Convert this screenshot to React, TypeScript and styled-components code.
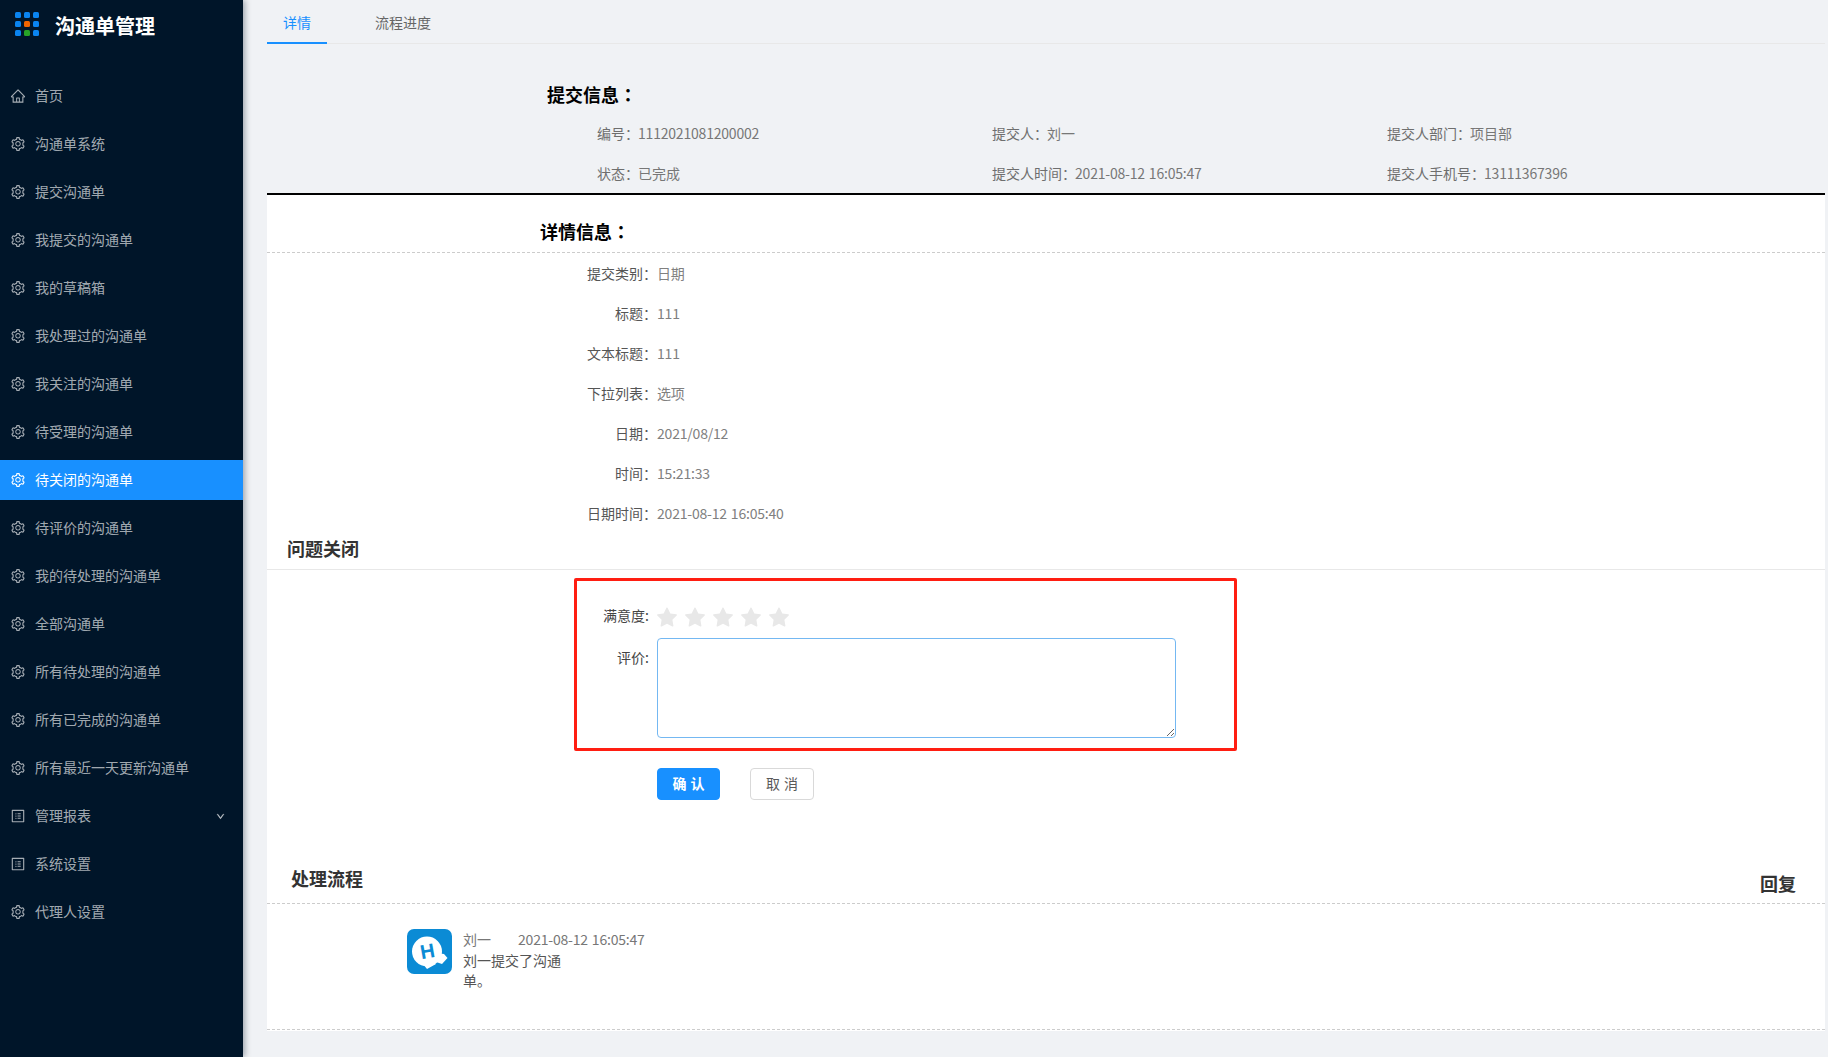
import React from "react";
import styled, { createGlobalStyle } from "styled-components";
import { AiFillStar, AiOutlineHome, AiOutlineProfile, AiOutlineSetting, AiOutlineDown } from "react-icons/ai";

const Global = createGlobalStyle`
  html, body { margin: 0; padding: 0; height: 100%; overflow: hidden; }
  body { background: #f0f2f5; font-family: "Noto Sans CJK SC", "Liberation Sans", sans-serif; font-size: 14px; }
  * { box-sizing: border-box; }
`;

const Page = styled.div`
  display: flex;
  height: 1057px;
`;

const Sidebar = styled.aside`
  width: 243px;
  flex: none;
  background: #001529;
  box-shadow: 2px 0 6px rgba(0, 21, 41, 0.35);
  position: relative;
  z-index: 2;
`;

const Brand = styled.div`
  display: flex;
  height: 76px;
  padding: 12px 0 0 15px;
  gap: 16px;
`;

const BrandGrid = styled.div`
  display: grid;
  grid-template-columns: repeat(3, 6px);
  grid-auto-rows: 6px;
  gap: 3px;
  height: 24px;
`;

const BrandDot = styled.span<{ $c: string }>`
  border-radius: 1.5px;
  background: ${(p) => p.$c};
`;

const BrandTitle = styled.div`
  color: #fff;
  font-size: 20px;
  font-weight: 700;
  line-height: 28px;
`;

const Menu = styled.nav`
  display: flex;
  flex-direction: column;
  gap: 8px;
`;

const MenuItem = styled.div<{ $active?: boolean }>`
  display: flex;
  align-items: center;
  gap: 8px;
  height: 40px;
  padding: 0 16px 0 10px;
  font-size: 14px;
  color: ${(p) => (p.$active ? "#fff" : "rgba(255,255,255,0.65)")};
  background: ${(p) => (p.$active ? "#1890ff" : "transparent")};
  svg { flex: none; }
`;

const MenuLabel = styled.span`
  flex: 1;
  padding: 0 0 2px 1px;
`;

const Arrow = styled(AiOutlineDown)`
  margin-right: 2px;
  stroke: currentColor;
  stroke-width: 60;
`;

const Main = styled.main`
  flex: 1;
  min-width: 0;
  padding: 0 3px 0 24px;
`;

const Tabs = styled.div`
  display: flex;
  gap: 32px;
  height: 44px;
  border-bottom: 1px solid #e8e8e8;
`;

const Tab = styled.div<{ $active?: boolean }>`
  height: 44px;
  padding: 11px 16px 0;
  line-height: 22px;
  font-size: 14px;
  color: ${(p) => (p.$active ? "#1890ff" : "#666")};
  border-bottom: 2px solid ${(p) => (p.$active ? "#1890ff" : "transparent")};
`;

const InfoSection = styled.section`
  height: 151px;
  padding: 38px 0 0 280px;
  border-bottom: 2px solid #000;
`;

const Title = styled.h2`
  margin: 0;
  font-family: "Noto Sans CJK TC", "Noto Sans CJK SC", sans-serif;
  font-size: 18px;
  font-weight: 700;
  line-height: 24px;
  color: #000;
`;

const InfoGrid = styled.div`
  display: grid;
  grid-template-columns: repeat(3, 395px);
  row-gap: 20px;
  margin: 17px 0 0 50px;
`;

const InfoCell = styled.div`
  line-height: 20px;
  color: #6e6e6e;
  font-size: 14px;
  white-space: nowrap;
`;

const InfoValue = styled.span`
  margin-left: -1px;
  color: #777;
`;

const Num = styled.span`
  letter-spacing: -0.2px;
  word-spacing: 1px;
`;

const Card = styled.section`
  background: #fff;
  height: 836px;
`;

const DetailHead = styled.div`
  padding: 24px 0 9px 273px;
  border-bottom: 1px dashed #ccc;
`;

const DetailRows = styled.div`
  display: flex;
  flex-direction: column;
  gap: 20px;
  padding-top: 10px;
`;

const DetailRow = styled.div`
  display: flex;
  line-height: 20px;
`;

const DetailLabel = styled.span`
  width: 390px;
  text-align: right;
  color: #555;
`;

const DetailValue = styled.span`
  color: #808080;
`;

const SectionTitle = styled.h3`
  margin: 13px 0 0;
  padding: 0 0 9px 20px;
  font-size: 18px;
  font-weight: 700;
  line-height: 24px;
  color: #333;
  border-bottom: 1px solid #e8e8e8;
`;

const RedBox = styled.div`
  width: 663px;
  margin: 8px 0 0 307px;
  padding: 26px 0 10px;
  border: 3px solid #ff1e12;
  border-radius: 2px;
  display: flex;
  flex-direction: column;
  gap: 11px;
`;

const FormRow = styled.div`
  display: flex;
  align-items: flex-start;
`;

const FormLabel = styled.label<{ $top: number }>`
  width: 80px;
  padding-right: 8px;
  text-align: right;
  line-height: 20px;
  color: #444;
  margin-top: ${(p) => p.$top}px;
`;

const Stars = styled.div`
  display: flex;
  gap: 4px;
  height: 20px;
  margin-left: -2px;
  color: #e8e8e8;
  svg { margin-top: -1px; }
`;

const TextArea = styled.textarea`
  display: block;
  width: 519px;
  height: 100px;
  border: 1px solid #74b8f2;
  border-radius: 4px;
  outline: none;
  background: #fff;
  resize: vertical;
`;

const Buttons = styled.div`
  display: flex;
  gap: 30px;
  margin: 17px 0 0 390px;
`;

const Button = styled.button<{ $primary?: boolean }>`
  width: ${(p) => (p.$primary ? 63 : 64)}px;
  height: 32px;
  padding: 0 0 2px;
  border-radius: 4px;
  font-family: inherit;
  font-size: 14px;
  letter-spacing: 4px;
  text-indent: 4px;
  font-weight: ${(p) => (p.$primary ? 700 : 400)};
  color: ${(p) => (p.$primary ? "#fff" : "#595959")};
  background: ${(p) => (p.$primary ? "#1890ff" : "#fff")};
  border: 1px solid ${(p) => (p.$primary ? "#1890ff" : "#d9d9d9")};
`;

const FlowHead = styled.div`
  display: flex;
  justify-content: space-between;
  align-items: flex-start;
  margin-top: 66px;
  padding: 0 29px 8px 24px;
  border-bottom: 1px dashed #ccc;
`;

const FlowTitle = styled.h3`
  margin: 0;
  font-size: 18px;
  font-weight: 700;
  line-height: 24px;
  color: #333;
`;

const ReplyTitle = styled(FlowTitle)`
  margin-top: 5px;
`;

const FlowEntry = styled.div`
  display: flex;
  gap: 11px;
  padding: 25px 0 38.5px 140px;
  border-bottom: 1px dashed #ccc;
`;

const FlowBody = styled.div`
  line-height: 20.5px;
`;

const FlowMeta = styled.div`
  color: #777;
  display: flex;
  gap: 27px;
  white-space: nowrap;
`;

const FlowText = styled.div`
  width: 100px;
  color: #555;
  word-break: break-all;
`;

const AvatarSvg = styled.svg`
  flex: none;
  display: block;
`;

const Avatar = () => (
  <AvatarSvg width="45" height="45" viewBox="0 0 45 45">
    <rect width="45" height="45" rx="7" fill="#0b8bd5" />
    <circle cx="20" cy="22.5" r="15" fill="#fff" />
    <path d="M16 35 L20 40 L29 35 Z" fill="#fff" />
    <path d="M29 24 L37 25 L40.5 29 L35 35 L29 33 Z" fill="#fff" />
    <text
      x="20.5"
      y="29"
      textAnchor="middle"
      fontFamily="'Liberation Sans', sans-serif"
      fontWeight="700"
      fontSize="20"
      fill="#0b8bd5"
      transform="rotate(-10 21 22)"
    >
      H
    </text>
  </AvatarSvg>
);

const dots = ["#0a84f0", "#0a84f0", "#0a84f0", "#0a84f0", "#f06400", "#0a84f0", "#0a84f0", "#27a327", "#0a84f0"];

type Icon = "home" | "gear" | "doc";
const menu: { label: string; icon: Icon; active?: boolean; arrow?: boolean }[] = [
  { label: "首页", icon: "home" },
  { label: "沟通单系统", icon: "gear" },
  { label: "提交沟通单", icon: "gear" },
  { label: "我提交的沟通单", icon: "gear" },
  { label: "我的草稿箱", icon: "gear" },
  { label: "我处理过的沟通单", icon: "gear" },
  { label: "我关注的沟通单", icon: "gear" },
  { label: "待受理的沟通单", icon: "gear" },
  { label: "待关闭的沟通单", icon: "gear", active: true },
  { label: "待评价的沟通单", icon: "gear" },
  { label: "我的待处理的沟通单", icon: "gear" },
  { label: "全部沟通单", icon: "gear" },
  { label: "所有待处理的沟通单", icon: "gear" },
  { label: "所有已完成的沟通单", icon: "gear" },
  { label: "所有最近一天更新沟通单", icon: "gear" },
  { label: "管理报表", icon: "doc", arrow: true },
  { label: "系统设置", icon: "doc" },
  { label: "代理人设置", icon: "gear" },
];

const icons = { home: AiOutlineHome, gear: AiOutlineSetting, doc: AiOutlineProfile };

const info: [string, string, boolean][] = [
  ["编号：", "1112021081200002", true],
  ["提交人：", "刘一", false],
  ["提交人部门：", "项目部", false],
  ["状态：", "已完成", false],
  ["提交人时间：", "2021-08-12 16:05:47", true],
  ["提交人手机号：", "13111367396", true],
];

const details: [string, string][] = [
  ["提交类别：", "日期"],
  ["标题：", "111"],
  ["文本标题：", "111"],
  ["下拉列表：", "选项"],
  ["日期：", "2021/08/12"],
  ["时间：", "15:21:33"],
  ["日期时间：", "2021-08-12 16:05:40"],
];

export default function App() {
  return (
    <>
      <Global />
      <Page>
        <Sidebar>
          <Brand>
            <BrandGrid>
              {dots.map((c, i) => (
                <BrandDot key={i} $c={c} />
              ))}
            </BrandGrid>
            <BrandTitle>沟通单管理</BrandTitle>
          </Brand>
          <Menu>
            {menu.map((m) => {
              const I = icons[m.icon];
              return (
                <MenuItem key={m.label} $active={m.active}>
                  <I size={16} />
                  <MenuLabel>{m.label}</MenuLabel>
                  {m.arrow && <Arrow size={9} />}
                </MenuItem>
              );
            })}
          </Menu>
        </Sidebar>
        <Main>
          <Tabs>
            <Tab $active>详情</Tab>
            <Tab>流程进度</Tab>
          </Tabs>
          <InfoSection>
            <Title>提交信息：</Title>
            <InfoGrid>
              {info.map(([k, v, n]) => (
                <InfoCell key={k}>
                  {k}
                  <InfoValue>{n ? <Num>{v}</Num> : v}</InfoValue>
                </InfoCell>
              ))}
            </InfoGrid>
          </InfoSection>
          <Card>
            <DetailHead>
              <Title>详情信息：</Title>
            </DetailHead>
            <DetailRows>
              {details.map(([k, v]) => (
                <DetailRow key={k}>
                  <DetailLabel>{k}</DetailLabel>
                  <DetailValue>
                    <Num>{v}</Num>
                  </DetailValue>
                </DetailRow>
              ))}
            </DetailRows>
            <SectionTitle>问题关闭</SectionTitle>
            <RedBox>
              <FormRow>
                <FormLabel $top={-2}>满意度:</FormLabel>
                <Stars>
                  {[0, 1, 2, 3, 4].map((i) => (
                    <AiFillStar key={i} size={24} />
                  ))}
                </Stars>
              </FormRow>
              <FormRow>
                <FormLabel $top={9}>评价:</FormLabel>
                <TextArea />
              </FormRow>
            </RedBox>
            <Buttons>
              <Button $primary>确认</Button>
              <Button>取消</Button>
            </Buttons>
            <FlowHead>
              <FlowTitle>处理流程</FlowTitle>
              <ReplyTitle>回复</ReplyTitle>
            </FlowHead>
            <FlowEntry>
              <Avatar />
              <FlowBody>
                <FlowMeta>
                  <span>刘一</span>
                  <Num>2021-08-12 16:05:47</Num>
                </FlowMeta>
                <FlowText>刘一提交了沟通单。</FlowText>
              </FlowBody>
            </FlowEntry>
          </Card>
        </Main>
      </Page>
    </>
  );
}
